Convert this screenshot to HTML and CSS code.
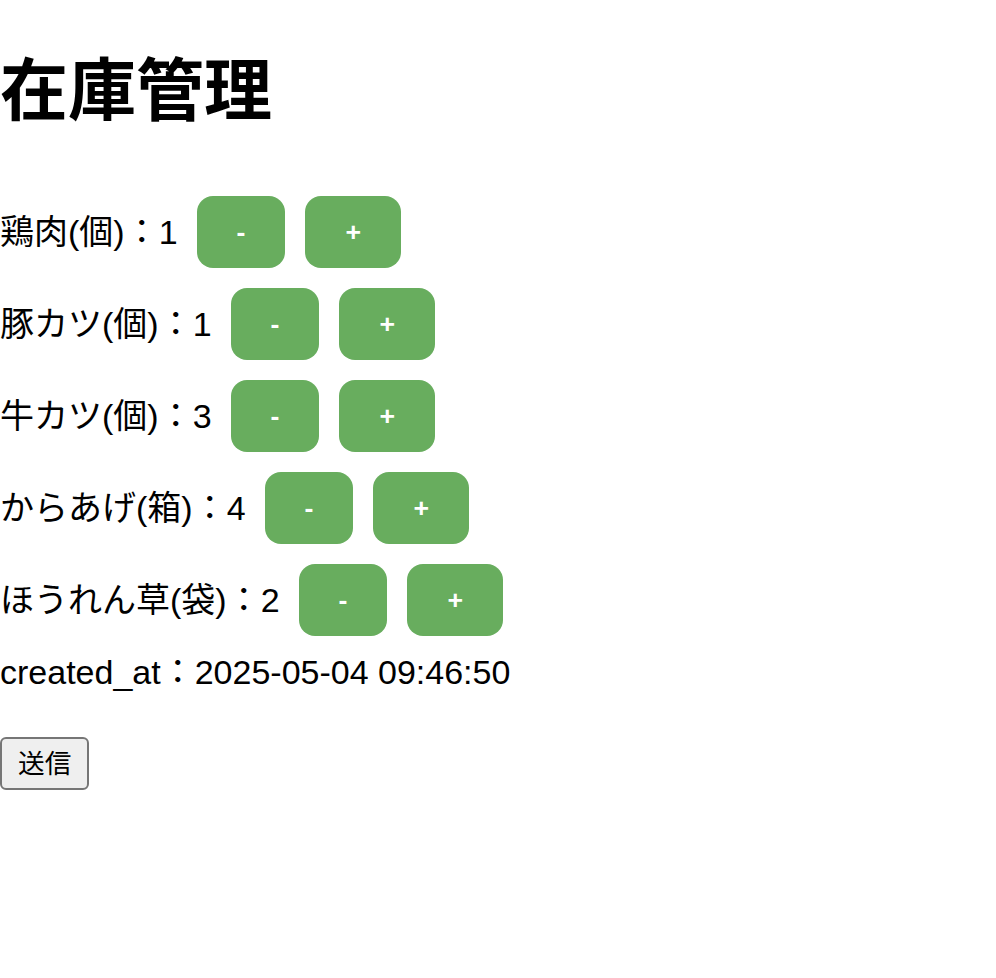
FILE: index.html
```html
<!DOCTYPE html>
<html lang="ja">
<head>
<meta charset="utf-8">
<title>在庫管理</title>
<link rel="stylesheet" href="styles.css">
</head>
<body>
<h1 class="title">在庫管理</h1>
<form class="stock-form">
  <div class="item-row"><span class="item-label">鶏肉(個)：1</span><button type="button" class="qty-btn">-</button><button type="button" class="qty-btn">+</button></div>
  <div class="item-row"><span class="item-label">豚カツ(個)：1</span><button type="button" class="qty-btn">-</button><button type="button" class="qty-btn">+</button></div>
  <div class="item-row"><span class="item-label">牛カツ(個)：3</span><button type="button" class="qty-btn">-</button><button type="button" class="qty-btn">+</button></div>
  <div class="item-row"><span class="item-label">からあげ(箱)：4</span><button type="button" class="qty-btn">-</button><button type="button" class="qty-btn">+</button></div>
  <div class="item-row"><span class="item-label">ほうれん草(袋)：2</span><button type="button" class="qty-btn">-</button><button type="button" class="qty-btn">+</button></div>
  <p class="created">created_at：2025-05-04 09:46:50</p>
  <button type="submit" class="submit-btn">送信</button>
</form>
</body>
</html>
```
FILE: styles.css
```css
html, body {
  margin: 0;
  padding: 0;
  background: #ffffff;
}
body {
  font-family: "Liberation Sans", "Noto Sans CJK JP", sans-serif;
  font-size: 34px;
  line-height: 39px;
  color: #000000;
}
.title {
  font-size: 68px;
  line-height: 78px;
  font-weight: bold;
  margin: 52px 0 0 0;
}
.stock-form {
  display: flex;
  flex-direction: column;
  align-items: flex-start;
  margin-top: 66px;
}
.item-row {
  display: flex;
  align-items: center;
  height: 72px;
  margin-bottom: 20px;
}
.item-label {
  white-space: nowrap;
  margin-right: 19px;
}
.qty-btn {
  font-family: "Liberation Sans", "Noto Sans CJK JP", sans-serif;
  font-size: 26.67px;
  font-weight: bold;
  color: #ffffff;
  background: #68ad5e;
  border: none;
  border-radius: 16px;
  height: 72px;
  padding: 0 40px;
  margin: 0 20px 0 0;
  cursor: pointer;
}
.created {
  margin: -3px 0 0 0;
}
.submit-btn {
  font-family: "Liberation Sans", "Noto Sans CJK JP", sans-serif;
  font-size: 26.67px;
  line-height: 32px;
  color: #000000;
  background: #efefef;
  border: 2px solid #767676;
  border-radius: 6px;
  height: 53px;
  padding: 0 16px;
  margin-top: 45px;
}
```
